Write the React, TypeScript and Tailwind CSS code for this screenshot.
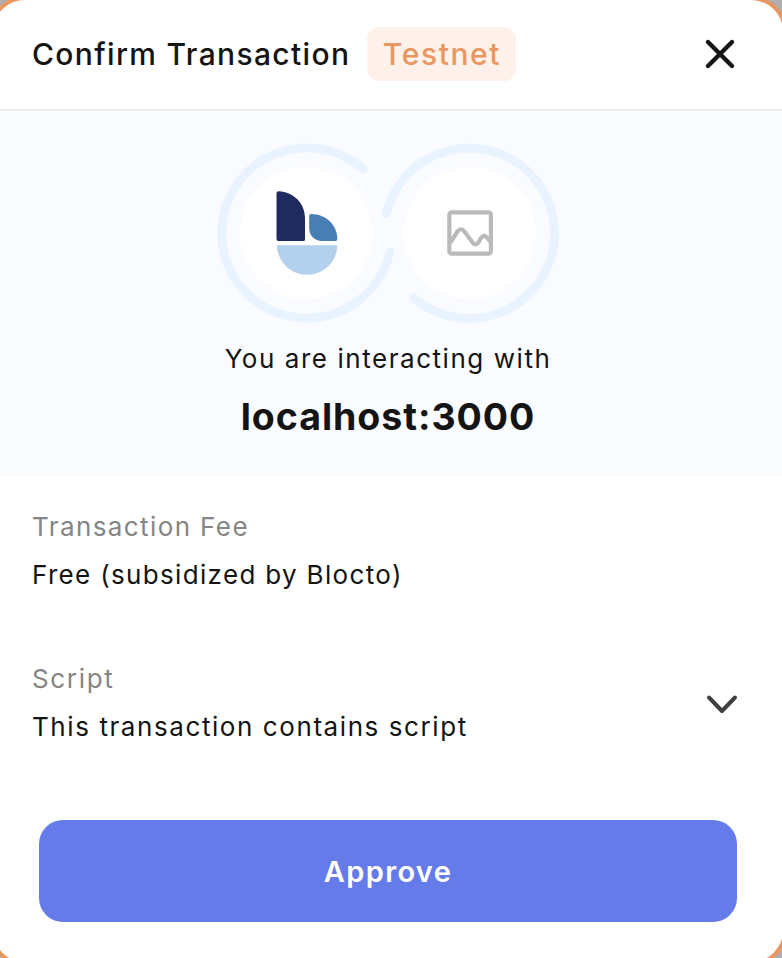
import type { ReactNode } from "react";

function BloctoLogo() {
  return (
    <>
      <path
        d="M276.5 193.2Q276.5 191 279 191.2C293.5 192 305 203 305 218V239.500Q305 241 303.500 241H278.500Q276.500 241 276.500 239Z"
        fill="#1f2b5f"
      />
      <path
        d="M309.200 215.800Q309.200 214 311 214C326 214 337.300 225 337.300 239Q337.300 241 335.500 241H322C314.500 241 309.200 235.500 309.200 228Z"
        fill="#497eb4"
      />
      <path
        d="M278 245.200H336.300Q337.400 245.200 337.300 246.700C336 263 323 274.800 307.100 274.800C291 274.800 278.200 262.500 276.900 246.700Q276.800 245.200 278 245.200Z"
        fill="#b3d1ed"
      />
    </>
  );
}

function ConnectionArt() {
  return (
    <svg width="344" height="184" viewBox="216 141 344 184" fill="none" className="block">
      <g stroke="#e8f3ff" strokeWidth="8.800" strokeLinecap="round">
        <path d="M363.200 169.100A85.200 85.200 0 1 0 389.900 252" />
        <path d="M386.400 213.600A85.200 85.200 0 1 1 413.700 297.800" />
      </g>
      <circle cx="306" cy="233" r="66" fill="white" />
      <circle cx="470" cy="233" r="66" fill="white" />
      <BloctoLogo />
      <g stroke="#bababa" strokeWidth="4.200" strokeLinejoin="round">
        <rect x="449.300" y="212.300" width="41.600" height="41.400" rx="2.500" />
        <path d="M450 243L457.500 231.500Q460.800 227 464.500 231.500L472.300 242.300Q475.300 246.500 478.400 242.500L480.700 238.500Q483.600 234 486.800 237.500L491 242.500" />
      </g>
    </svg>
  );
}

function Field({ children }: { children: ReactNode }) {
  return (
    <div className="flex flex-col items-start whitespace-nowrap text-[26px] leading-[48px]">
      {children}
    </div>
  );
}

export default function App() {
  return (
    <div className="flex h-[958px] w-[782px] overflow-hidden bg-[#b0b0b0] font-['Inter',sans-serif] text-[#141414]">
      <main className="-ml-[11px] -mt-[4.5px] flex h-[970.5px] w-[798px] shrink-0 flex-col overflow-hidden rounded-[36px] border-4 border-[#e99761] bg-white pt-[0.5px]">
        <header className="flex h-[111px] shrink-0 items-center border-b-2 border-[#efefef] pb-[2px] pl-[39px] pr-[47px]">
          <h1 className="w-[335px] whitespace-nowrap pt-px text-[30px] font-medium tracking-[1.35px]">
            Confirm Transaction
          </h1>
          <span className="flex h-[54px] w-[149px] items-center justify-center rounded-xl bg-[#fdf1ea] pl-px pt-px text-[30px] font-medium tracking-[1.6px] text-[#e99761]">
            Testnet
          </span>
          <button aria-label="Close" className="ml-auto">
            <svg width="32" height="32" viewBox="0 0 32 32" fill="none" stroke="#141414" strokeWidth="4.400" strokeLinecap="round">
              <path d="M4 4L28 28M28 4L4 28" />
            </svg>
          </button>
        </header>

        <section className="flex h-[364px] shrink-0 flex-col items-center bg-[#fafbff] pt-[30px]">
          <ConnectionArt />
          <p className="mt-[14px] whitespace-nowrap text-[26px] leading-[40px] tracking-[1.55px]">
            You are interacting with
          </p>
          <p className="mt-[13px] whitespace-nowrap text-[37.5px] font-bold leading-[50px] tracking-[0.95px]">
            localhost:3000
          </p>
        </section>

        <section className="pl-[39px] pt-[28px]">
          <Field>
            <span className="tracking-[1.4px] text-[#858585]">Transaction Fee</span>
            <span className="tracking-[1.33px]">Free (subsidized by Blocto)</span>
          </Field>
        </section>

        <section className="mt-[56px] flex items-center justify-between pl-[39px] pr-[44px]">
          <Field>
            <span className="tracking-[1.65px] text-[#858585]">Script</span>
            <span className="tracking-[1.58px]">This transaction contains script</span>
          </Field>
          <svg width="34" height="24" viewBox="0 0 34 24" fill="none" stroke="#404040" strokeWidth="4" strokeLinecap="round" strokeLinejoin="round" className="mt-[3px]">
            <path d="M4 4.500L17 18L30 4.500" />
          </svg>
        </section>

        <button className="ml-[46px] mt-[69px] h-[102px] w-[698px] shrink-0 rounded-[24px] bg-[#667bea] pt-[2px] text-[29px] font-semibold tracking-[1.35px] text-white">
          Approve
        </button>
      </main>
    </div>
  );
}
